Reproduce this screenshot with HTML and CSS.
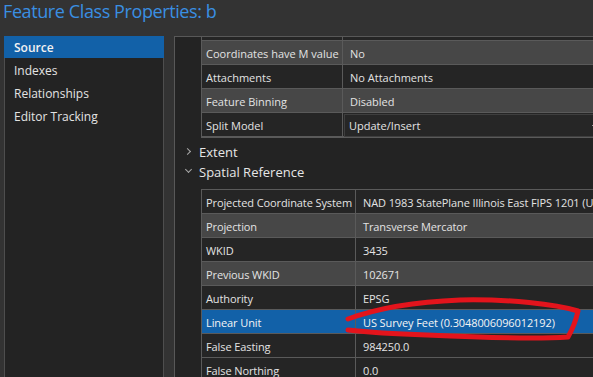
FILE: index.html
```html
<!DOCTYPE html>
<html lang="en">
<head>
  <meta charset="UTF-8" />
  <title>Feature Class Properties: b</title>
  <link rel="stylesheet" href="styles.css">
</head>
<body>
  <h1 class="title">Feature Class Properties: b</h1>

  <div class="dialog">
    <ul class="nav">
      <li class="nav-item selected">Source</li>
      <li class="nav-item">Indexes</li>
      <li class="nav-item">Relationships</li>
      <li class="nav-item">Editor Tracking</li>
    </ul>

    <div class="content">
      <div class="grid grid-source">
        <div class="row partial"><span class="key"></span><span class="val"></span></div>
        <div class="row alt"><span class="key">Coordinates have M value</span><span class="val">No</span></div>
        <div class="row"><span class="key">Attachments</span><span class="val">No Attachments</span></div>
        <div class="row alt"><span class="key">Feature Binning</span><span class="val">Disabled</span></div>
        <div class="row"><span class="key">Split Model</span><span class="val edit">Update/Insert<i class="drop"></i></span></div>
      </div>

      <div class="section collapsed"><span class="chev"></span>Extent</div>
      <div class="section expanded"><span class="chev"></span>Spatial Reference</div>

      <div class="grid grid-sr">
        <div class="row"><span class="key">Projected Coordinate System</span><span class="val">NAD 1983 StatePlane Illinois East FIPS 1201 (US Feet)</span></div>
        <div class="row alt"><span class="key">Projection</span><span class="val">Transverse Mercator</span></div>
        <div class="row"><span class="key">WKID</span><span class="val">3435</span></div>
        <div class="row alt"><span class="key">Previous WKID</span><span class="val">102671</span></div>
        <div class="row"><span class="key">Authority</span><span class="val">EPSG</span></div>
        <div class="row picked"><span class="key">Linear Unit</span><span class="val">US Survey Feet (0.3048006096012192)</span></div>
        <div class="row"><span class="key">False Easting</span><span class="val">984250.0</span></div>
        <div class="row"><span class="key">False Northing</span><span class="val">0.0</span></div>
      </div>
    </div>
  </div>

  <svg class="markup" width="593" height="377" viewBox="0 0 593 377">
    <path d="M348 319 C 375 309, 410 302, 460 300 C 510 299, 555 304, 578 311 C 576 320, 572 330, 568 337 C 540 339, 470 337, 427 335 C 395 334, 365 332, 348 330" />
  </svg>
</body>
</html>
```

FILE: styles.css
```css
body {
  margin: 0;
  width: 593px;
  height: 377px;
  overflow: hidden;
  background: #333333;
  color: #e3e3e3;
  font-family: "Open Sans", "Noto Sans", sans-serif;
  font-size: 11px;
  position: relative;
}

.title {
  margin: 0;
  height: 36px;
  padding-left: 3px;
  font-size: 18px;
  font-weight: 400;
  line-height: 23px;
  color: #3a8fe2;
  letter-spacing: -0.4px;
}

.dialog {
  display: flex;
  gap: 10px;
  padding-left: 4px;
  height: 341px;
}

/* left page list */
.nav {
  list-style: none;
  margin: 0;
  padding: 0;
  width: 158px;
  background: #232323;
  border-left: 1px solid #4e4e4e;
  border-right: 1px solid #4e4e4e;
}

.nav-item {
  height: 23px;
  line-height: 25px;
  padding-left: 9px;
  font-size: 12px;
  overflow: hidden;
}

.nav-item.selected {
  height: 22px;
  line-height: 24px;
  background: #1261a8;
  color: #f2f2f2;
  font-weight: 600;
  margin-left: -1px;
  margin-right: -1px;
  padding-left: 10px;
}

/* right property pane */
.content {
  flex: 1;
  background: #232323;
  border-top: 1px solid #585858;
  border-left: 1px solid #585858;
  padding-left: 26px;
  overflow: hidden;
}

.grid {
  border-left: 1px solid #5a5a5a;
  width: 420px;
}

.row {
  display: flex;
  height: 21px;
  padding-top: 2px;
  border-bottom: 1px solid #5a5a5a;
  background: #252525;
  line-height: 21px;
  white-space: nowrap;
}

.row.alt {
  background: #474747;
}

.row.partial {
  height: 3px;
  padding-top: 0;
}

.row.picked {
  background: #1261a8;
  color: #f4f4f4;
}

.key {
  flex: none;
  padding-left: 4px;
  margin-top: -2px;
  padding-top: 2px;
  border-right: 1px solid #5a5a5a;
  overflow: hidden;
}

.grid-source .key {
  width: 136px;
}

.grid-sr .key {
  width: 149px;
}

.grid-sr {
  letter-spacing: -0.1px;
}

.val {
  padding-left: 7px;
}

.val.edit {
  flex: 1;
  position: relative;
  margin: -1px 0 0 1px;
  height: 21px;
  line-height: 22px;
  padding-left: 4px;
  border: 1px solid #3e3e3e;
  background: #262626;
}

.drop {
  position: absolute;
  left: 247px;
  top: 10px;
  width: 2px;
  height: 1px;
  background: #9a9a9a;
}

.grid-source {
  border-bottom: 1px solid #5a5a5a;
  margin-bottom: 4px;
}

/* collapsible section headers */
.section {
  position: relative;
  height: 20px;
  line-height: 21px;
  margin-left: -2px;
  font-size: 13px;
  color: #e6e6e6;
}

.chev {
  position: absolute;
  left: -13px;
  top: 7px;
  width: 4px;
  height: 4px;
  border-right: 1.5px solid #a8a8a8;
  border-bottom: 1.5px solid #a8a8a8;
}

.collapsed .chev {
  transform: rotate(-45deg);
  left: -14px;
}

.expanded .chev {
  transform: rotate(45deg);
  top: 5px;
}

.grid-sr {
  margin-top: 7px;
  border-top: 1px solid #5a5a5a;
}

/* hand-drawn red highlight */
.markup {
  position: absolute;
  left: 0;
  top: 0;
  pointer-events: none;
}

.markup path {
  fill: none;
  stroke: #e3141c;
  stroke-width: 5;
  stroke-linecap: round;
  stroke-linejoin: round;
}
```
